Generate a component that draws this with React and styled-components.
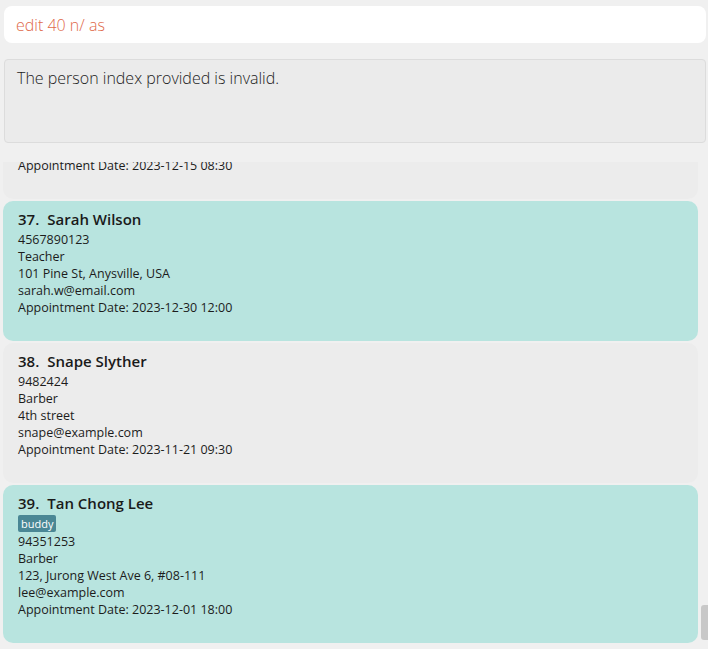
import { useEffect, useRef } from 'react';
import styled, { createGlobalStyle } from 'styled-components';

const GlobalStyle = createGlobalStyle`
  html, body {
    margin: 0;
    padding: 0;
    background: #f0f0f0;
  }
  * {
    box-sizing: border-box;
  }
`;

const StyledApp = styled.div`
  width: 708px;
  height: 649px;
  display: flex;
  flex-direction: column;
  overflow: hidden;
  font-family: 'Open Sans', 'Noto Sans', sans-serif;
  color: #1c1c1c;
`;

const CommandBox = styled.div`
  margin: 6px 2px 0 4px;
  height: 37px;
  background: #ffffff;
  border-radius: 8px;
  display: flex;
  align-items: center;
  padding-left: 12px;
  font-size: 16px;
  font-weight: 300;
  color: ${props => (props.error ? '#e0694a' : '#1c1c1c')};
`;

const ResultBox = styled.div`
  margin: 16px 2px 0 4px;
  height: 84px;
  background: #ebebeb;
  border: 1px solid #dcdcdc;
  border-radius: 4px;
  padding: 7px 12px;
  font-size: 16px;
  font-weight: 300;
  color: #1c1c1c;
`;

const ListArea = styled.div`
  margin-top: 19px;
  flex: 1;
  min-height: 0;
  display: flex;
`;

const ListScroll = styled.div`
  flex: 1;
  min-width: 0;
  overflow-y: scroll;
  scrollbar-width: none;
  padding-left: 3px;

  &::-webkit-scrollbar {
    display: none;
  }
`;

const CardColumn = styled.div`
  display: flex;
  flex-direction: column;
  gap: 2px;
  padding-bottom: 6px;
`;

const ScrollTrack = styled.div`
  width: 7px;
  margin-left: 3px;
  display: flex;
  flex-direction: column;
  justify-content: flex-end;
`;

const ScrollThumb = styled.div`
  height: 35px;
  margin-bottom: 9px;
  background: #c8c8c8;
  border-radius: 3px 0 0 3px;
`;

const Card = styled.div`
  flex-shrink: 0;
  background: ${props => (props.odd ? '#b8e4df' : '#ececec')};
  border-radius: 10px;
  padding: 6px 15px 25px;
  font-size: 12.5px;
  line-height: 17px;
`;

const Name = styled.div`
  font-size: 15px;
  font-weight: 600;
  line-height: 24px;
  color: #1a1a1a;

  span {
    margin-right: 8px;
  }
`;

const Tags = styled.div`
  display: flex;
  gap: 4px;
  height: 18px;
  align-items: flex-start;
`;

const Tag = styled.span`
  background: #4a8795;
  color: #ffffff;
  font-size: 11px;
  line-height: 17px;
  padding: 0 3px;
  border-radius: 2px;
`;

const Line = styled.div`
  white-space: nowrap;
`;

const fillers = [
  ['Alex Yeoh', '87438807', 'Engineer', 'Blk 30 Geylang Street 29, #06-40', 'alexyeoh@example.com', '2023-11-02 10:00'],
  ['Bernice Yu', '99272758', 'Designer', 'Blk 30 Lorong 3 Serangoon Gardens, #07-18', 'berniceyu@example.com', '2023-11-05 14:30'],
  ['Charlotte Oliveiro', '93210283', 'Nurse', 'Blk 11 Ang Mo Kio Street 74, #11-04', 'charlotte@example.com', '2023-11-08 09:00'],
];

const people = [
  ...Array.from({ length: 35 }, (_, i) => {
    const f = fillers[i % fillers.length];
    return { name: f[0], phone: f[1], job: f[2], address: f[3], email: f[4], date: f[5], tags: [] };
  }),
  {
    name: 'Michael Brown',
    phone: '3456789012',
    job: 'Accountant',
    address: '55 Oak Ave, Springfield, USA',
    email: 'michael.b@email.com',
    date: '2023-12-15 08:30',
    tags: [],
  },
  {
    name: 'Sarah Wilson',
    phone: '4567890123',
    job: 'Teacher',
    address: '101 Pine St, Anysville, USA',
    email: 'sarah.w@email.com',
    date: '2023-12-30 12:00',
    tags: [],
  },
  {
    name: 'Snape Slyther',
    phone: '9482424',
    job: 'Barber',
    address: '4th street',
    email: 'snape@example.com',
    date: '2023-11-21 09:30',
    tags: [],
  },
  {
    name: 'Tan Chong Lee',
    phone: '94351253',
    job: 'Barber',
    address: '123, Jurong West Ave 6, #08-111',
    email: 'lee@example.com',
    date: '2023-12-01 18:00',
    tags: ['buddy'],
  },
];

const PersonCard = ({ person, index }) => (
  <Card odd={index % 2 === 1}>
    <Name>
      <span>{index}.</span>
      {person.name}
    </Name>
    {person.tags.length > 0 && (
      <Tags>
        {person.tags.map(tag => (
          <Tag key={tag}>{tag}</Tag>
        ))}
      </Tags>
    )}
    <Line>{person.phone}</Line>
    <Line>{person.job}</Line>
    <Line>{person.address}</Line>
    <Line>{person.email}</Line>
    <Line>Appointment Date: {person.date}</Line>
  </Card>
);

const App = () => {
  const listRef = useRef(null);

  useEffect(() => {
    // list is scrolled to the last person
    if (listRef.current) listRef.current.scrollTop = listRef.current.scrollHeight;
  }, []);

  return (
    <StyledApp>
      <GlobalStyle />
      <CommandBox error>edit 40 n/ as</CommandBox>
      <ResultBox>The person index provided is invalid.</ResultBox>
      <ListArea>
        <ListScroll ref={listRef}>
          <CardColumn>
            {people.map((person, i) => (
              <PersonCard key={i + 1} person={person} index={i + 1} />
            ))}
          </CardColumn>
        </ListScroll>
        <ScrollTrack>
          <ScrollThumb />
        </ScrollTrack>
      </ListArea>
    </StyledApp>
  );
};

export default App;
